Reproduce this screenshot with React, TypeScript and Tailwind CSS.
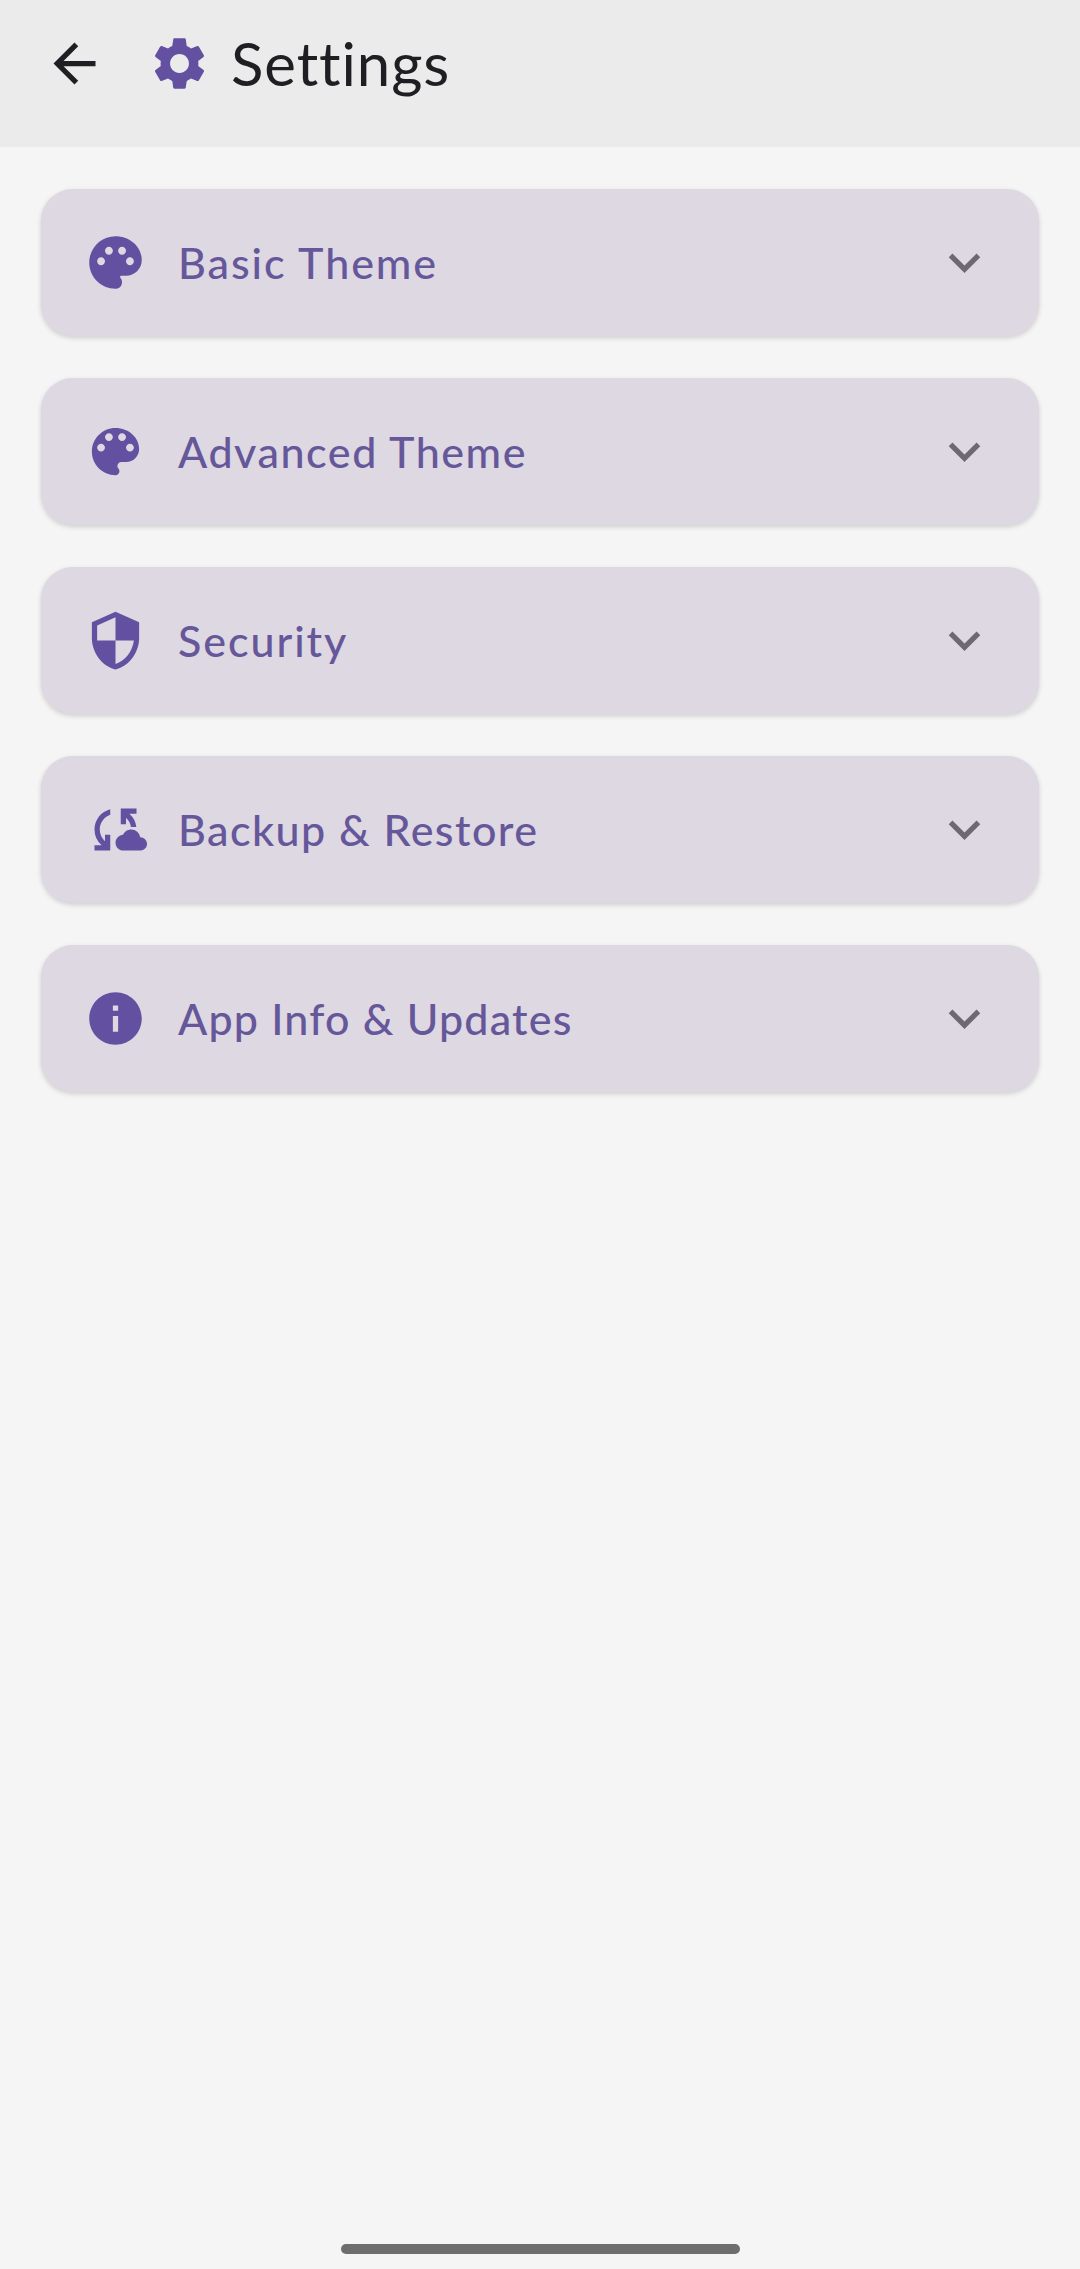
const icons = {
  back: 'M20 11H7.83l5.59-5.59L12 4l-8 8 8 8 1.41-1.41L7.83 13H20v-2z',
  settings:
    'M19.14 12.94c.04-.3.06-.61.06-.94 0-.32-.02-.64-.07-.94l2.03-1.58c.18-.14.23-.41.12-.61l-1.92-3.32c-.12-.22-.37-.29-.59-.22l-2.39.96c-.5-.38-1.03-.7-1.62-.94l-.36-2.54c-.04-.24-.24-.41-.48-.41h-3.84c-.24 0-.43.17-.47.41l-.36 2.54c-.59.24-1.13.57-1.62.94l-2.39-.96c-.22-.08-.47 0-.59.22L2.74 8.87c-.12.21-.08.47.12.61l2.03 1.58c-.05.3-.09.63-.09.94s.02.64.07.94l-2.03 1.58c-.18.14-.23.41-.12.61l1.92 3.32c.12.22.37.29.59.22l2.39-.96c.5.38 1.03.7 1.62.94l.36 2.54c.05.24.24.41.48.41h3.84c.24 0 .44-.17.47-.41l.36-2.54c.59-.24 1.13-.56 1.62-.94l2.39.96c.22.08.47 0 .59-.22l1.92-3.32c.12-.22.07-.47-.12-.61l-2.01-1.58zM12 15.6c-1.98 0-3.6-1.62-3.6-3.6s1.62-3.6 3.6-3.6 3.6 1.62 3.6 3.6-1.62 3.6-3.6 3.6z',
  paletteLarge:
    'M12 2C6.49 2 2 6.49 2 12s4.49 10 10 10c1.38 0 2.5-1.12 2.5-2.5 0-.61-.23-1.2-.64-1.67-.08-.1-.13-.21-.13-.33 0-.28.22-.5.5-.5H16c3.31 0 6-2.69 6-6 0-4.96-4.49-9-10-9zm5.5 11c-.83 0-1.5-.67-1.5-1.5s.67-1.5 1.5-1.5 1.5.67 1.5 1.5-.67 1.5-1.5 1.5zm-3-4c-.83 0-1.5-.67-1.5-1.5S13.67 6 14.5 6s1.5.67 1.5 1.5S15.33 9 14.5 9zM5 11.5c0-.83.67-1.5 1.5-1.5s1.5.67 1.5 1.5S7.33 13 6.5 13 5 12.33 5 11.5zm6-4c0 .83-.67 1.5-1.5 1.5S8 8.33 8 7.5 8.67 6 9.5 6s1.5.67 1.5 1.5z',
  palette:
    'M12 3c-4.97 0-9 4.03-9 9s4.03 9 9 9c.83 0 1.5-.67 1.5-1.5 0-.39-.15-.74-.39-1.01-.23-.26-.38-.61-.38-.99 0-.83.67-1.5 1.5-1.5H16c2.76 0 5-2.24 5-5 0-4.42-4.03-8-9-8zm-5.5 9c-.83 0-1.5-.67-1.5-1.5S5.67 9 6.5 9 8 9.67 8 10.5 7.33 12 6.5 12zm3-4C8.67 8 8 7.33 8 6.5S8.67 5 9.5 5s1.5.67 1.5 1.5S10.33 8 9.5 8zm5 0c-.83 0-1.5-.67-1.5-1.5S13.67 5 14.5 5s1.5.67 1.5 1.5S15.33 8 14.5 8zm3 4c-.83 0-1.5-.67-1.5-1.5S16.67 9 17.5 9s1.5.67 1.5 1.5-.67 1.5-1.5 1.5z',
  security:
    'M12 1 3 5v6c0 5.55 3.84 10.74 9 12 5.16-1.26 9-6.45 9-12V5l-9-4zm0 10.99h7c-.53 4.12-3.28 7.79-7 8.94V12H5V6.3l7-3.11v8.8z',
  cloudSync:
    'M21.5 14.98c-.02 0-.03 0-.05.01A3.49 3.49 0 0 0 18 12c-1.4 0-2.6.83-3.16 2.02A2.987 2.987 0 0 0 12 17c0 1.66 1.34 3 3 3h6.5a2.5 2.5 0 0 0 0-5.02zM10 4.26v2.09C7.67 7.18 6 9.39 6 12c0 1.77.78 3.34 2 4.44V14h2v6H4v-2h2.73A7.942 7.942 0 0 1 4 12c0-3.73 2.55-6.85 6-7.74zM20 6h-2.73a7.98 7.98 0 0 1 2.66 5h-2.02c-.23-1.36-.93-2.55-1.91-3.44V10h-2V4h6v2z',
  info: 'M12 2C6.48 2 2 6.48 2 12s4.48 10 10 10 10-4.48 10-10S17.52 2 12 2zm1 15h-2v-6h2v6zm0-8h-2V7h2v2z',
  expand: 'M16.59 8.59 12 13.17 7.41 8.59 6 10l6 6 6-6z',
};

function Icon({ d, className }: { d: string; className?: string }) {
  return (
    <svg viewBox="0 0 24 24" fill="currentColor" className={`size-[63px] shrink-0 ${className ?? ''}`}>
      <path d={d} />
    </svg>
  );
}

const sections = [
  { label: 'Basic Theme', icon: icons.paletteLarge, spacing: 'tracking-[1.95px]' },
  { label: 'Advanced Theme', icon: icons.palette, spacing: 'tracking-[1.55px]' },
  { label: 'Security', icon: icons.security, spacing: 'tracking-[1.95px]' },
  { label: 'Backup & Restore', icon: icons.cloudSync, spacing: 'tracking-[1.45px]' },
  { label: 'App Info & Updates', icon: icons.info, spacing: 'tracking-[1.2px]' },
];

export default function App() {
  return (
    <div className="flex h-[2269px] w-[1080px] flex-col bg-[#f5f5f5] font-['Lato',sans-serif]">
      <header className="flex h-[147px] items-start bg-[#ebebeb] pt-8 pl-[43px] text-[#1f1e23]">
        <Icon d={icons.back} />
        <Icon d={icons.settings} className="ml-[42px] text-[#6350a0]" />
        <h1 className="-mt-0.5 ml-5 text-[60px] leading-[66px] tracking-[0.9px] whitespace-nowrap">Settings</h1>
      </header>

      <main className="flex flex-1 flex-col gap-[42px] px-[41px] pt-[42px]">
        {sections.map((s) => (
          <button
            key={s.label}
            className="flex h-[147px] w-full shrink-0 items-center rounded-[32px] bg-[#ddd8e1] px-[43px] text-left text-[#6350a0] shadow-[0_2px_5px_rgba(0,0,0,0.16)]"
          >
            <Icon d={s.icon} />
            <span className={`ml-[31px] flex-1 text-[43px] leading-[54px] font-medium whitespace-nowrap text-[#65579a] ${s.spacing}`}>
              {s.label}
            </span>
            <Icon d={icons.expand} className="text-[#6c6971]" />
          </button>
        ))}
      </main>

      <footer className="flex justify-center pb-[15px]">
        <div className="h-[10px] w-[399px] rounded-full bg-[#6e6e6e]" />
      </footer>
    </div>
  );
}
